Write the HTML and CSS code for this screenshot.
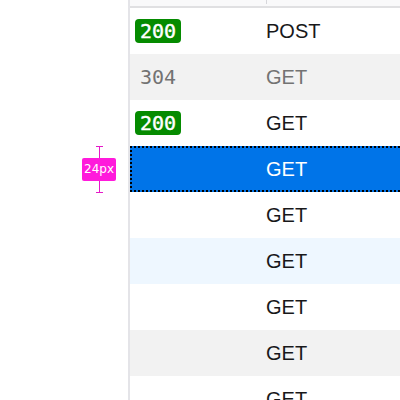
FILE: index.html
```html
<!DOCTYPE html>
<html>
<head>
<meta charset="utf-8">
<link rel="stylesheet" href="styles.css">
</head>
<body>
<div class="page">
  <div class="gutter">
    <div class="measure">
      <span class="cap"></span>
      <span class="label">24px</span>
      <span class="cap"></span>
    </div>
  </div>
  <div class="panel">
    <div class="header"><span class="tick"></span></div>
    <div class="row"><div class="status"><span class="badge">200</span></div><div class="method">POST</div></div>
    <div class="row odd cached"><div class="status"><span class="code">304</span></div><div class="method">GET</div></div>
    <div class="row"><div class="status"><span class="badge">200</span></div><div class="method">GET</div></div>
    <div class="row selected"><div class="status"></div><div class="method">GET</div></div>
    <div class="row"><div class="status"></div><div class="method">GET</div></div>
    <div class="row hover"><div class="status"></div><div class="method">GET</div></div>
    <div class="row"><div class="status"></div><div class="method">GET</div></div>
    <div class="row odd"><div class="status"></div><div class="method">GET</div></div>
    <div class="row"><div class="status"></div><div class="method">GET</div></div>
  </div>
</div>
</body>
</html>
```
FILE: styles.css
```css
html, body { margin: 0; padding: 0; background: #fff; }
body { width: 400px; height: 400px; overflow: hidden; font-family: "Liberation Sans", Arial, sans-serif; }
.page { display: flex; height: 400px; }
.gutter { width: 128px; flex: none; position: relative; }
.measure {
  position: absolute; left: 82px; top: 146px; width: 34px; height: 47px;
  display: flex; flex-direction: column; align-items: center; justify-content: center;
}
.measure::before {
  content: ""; position: absolute; left: 17px; top: 0; bottom: 0; width: 1px; background: #e619c9;
}
.measure .cap { position: absolute; left: 14px; width: 7px; height: 1px; background: #e619c9; }
.measure .cap:first-child { top: 0; }
.measure .cap:last-child { bottom: 0; }
.measure .label {
  position: relative; background: #ff1adb; color: #fff; font-family: "DejaVu Sans", sans-serif;
  font-size: 12px; line-height: 23px; height: 23px; width: 34px; text-align: center; border-radius: 2px;
}
.panel { flex: 1; border-left: 2px solid #e4e4e8; }
.header { height: 6px; background: #f9f9fa; border-bottom: 2px solid #e0e0e2; position: relative; }
.tick { position: absolute; left: 136px; top: 0; width: 1px; height: 4px; background: #d7d7db; }
.row { display: flex; align-items: center; height: 46px; color: #18181a; }
.row.odd { background: #f2f2f2; }
.row.hover { background: #eef7ff; }
.row.cached { color: #737373; }
.row.selected { background: #0074e8; color: #fff; border-top: 2px dotted #000; border-bottom: 2px dotted #000; border-left: 2px dotted #000; height: 42px; }
.status { width: 136px; flex: none; padding-left: 5px; box-sizing: border-box; }
.row.selected .status { width: 134px; }
.badge {
  display: inline-block; background: #058b00; color: #fff; border-radius: 4px;
  font-family: "DejaVu Sans Mono", monospace; font-size: 20px; line-height: 24px; padding: 0 5px;
  -webkit-text-stroke: 0.4px #fff;
}
.code { font-family: "DejaVu Sans Mono", monospace; font-size: 20px; line-height: 24px; padding-left: 5px; color: #737373; }
.method { font-size: 20px; }
```
